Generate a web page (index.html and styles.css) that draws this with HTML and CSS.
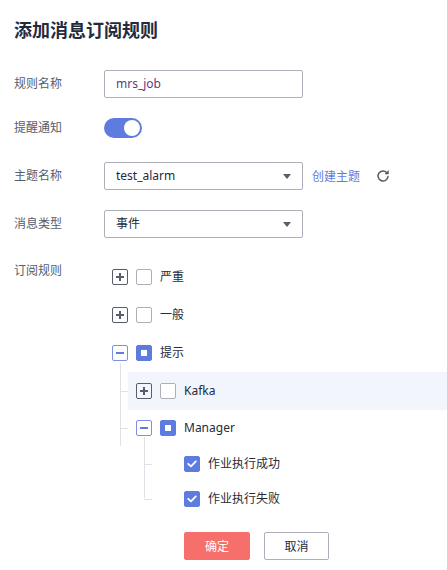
FILE: index.html
```html
<!DOCTYPE html>
<html lang="zh">
<head>
<meta charset="utf-8">
<title>添加消息订阅规则</title>
<link rel="stylesheet" href="styles.css">
</head>
<body>
<div class="page">
  <h1 class="title">添加消息订阅规则</h1>
  <div class="form">
    <div class="row r-name">
      <span class="lbl">规则名称</span>
      <div class="field input purple">mrs_job</div>
    </div>
    <div class="row r-toggle">
      <span class="lbl">提醒通知</span>
      <span class="switch"><span class="knob"></span></span>
    </div>
    <div class="row r-topic">
      <span class="lbl">主题名称</span>
      <div class="field select"><span>test_alarm</span><span class="caret"></span></div>
      <a class="link">创建主题</a>
      <svg class="refresh" width="14" height="14" viewBox="0 0 14 14" fill="none">
        <path d="M11.2 4.2 A5 5 0 1 0 12 7.6" stroke="#575d6c" stroke-width="1.5" stroke-linecap="round"/>
        <path d="M12.4 1.6 L12.4 5 L9 5 Z" fill="#575d6c" stroke="#575d6c" stroke-width="0.6" stroke-linejoin="round"/>
      </svg>
    </div>
    <div class="row r-type">
      <span class="lbl">消息类型</span>
      <div class="field select"><span>事件</span><span class="caret"></span></div>
    </div>
    <div class="row r-rules">
      <span class="lbl lbl-top">订阅规则</span>
      <div class="tree">
        <div class="node">
          <span class="tog plus"></span><span class="cb"></span><span class="txt">严重</span>
        </div>
        <div class="node">
          <span class="tog plus"></span><span class="cb"></span><span class="txt">一般</span>
        </div>
        <div class="node">
          <span class="tog minus"></span><span class="cb half"></span><span class="txt">提示</span>
        </div>
        <div class="children l1">
          <span class="vline vline-l1"></span>
          <div class="node conn active">
            <span class="tog plus"></span><span class="cb"></span><span class="txt">Kafka</span>
          </div>
          <div class="node conn mgr">
            <span class="tog minus"></span><span class="cb half"></span><span class="txt">Manager</span>
          </div>
          <div class="children l2">
            <span class="vline vline-l2"></span>
            <div class="node leaf conn">
              <span class="spacer"></span><span class="cb checked"><svg width="10" height="8" viewBox="0 0 10 8"><path d="M1.2 3.8 L4 6.4 L8.8 1.4" stroke="#fff" stroke-width="1.8" fill="none" stroke-linecap="round" stroke-linejoin="round"/></svg></span><span class="txt">作业执行成功</span>
            </div>
            <div class="node leaf conn">
              <span class="spacer"></span><span class="cb checked"><svg width="10" height="8" viewBox="0 0 10 8"><path d="M1.2 3.8 L4 6.4 L8.8 1.4" stroke="#fff" stroke-width="1.8" fill="none" stroke-linecap="round" stroke-linejoin="round"/></svg></span><span class="txt">作业执行失败</span>
            </div>
          </div>
        </div>
      </div>
    </div>
  </div>
  <div class="actions">
    <button class="btn primary">确定</button>
    <button class="btn">取消</button>
  </div>
</div>
</body>
</html>
```

FILE: styles.css
```css
* { box-sizing: border-box; }
html, body { margin: 0; padding: 0; background: #fff; }
body {
  font-family: "Noto Sans", "Noto Sans CJK SC", sans-serif;
  font-size: 12px;
  color: #252b3a;
}
.page { padding: 17px 0 0 14px; }
.title {
  margin: 0;
  font-size: 18px;
  line-height: 26px;
  font-weight: 700;
  color: #252b3a;
}
.form { margin-top: 27px; }
.row {
  display: flex;
  align-items: center;
  height: 28px;
}
.r-name { margin-bottom: 16px; }
.r-toggle { margin-bottom: 20px; }
.r-topic { margin-bottom: 20px; }
.r-type { margin-bottom: 20px; }
.r-rules { height: auto; align-items: flex-start; }
.lbl {
  width: 90px;
  flex: none;
  color: #575d6c;
  line-height: 18px;
}
.lbl-top { margin-top: 4px; }
.field {
  width: 199px;
  height: 28px;
  border: 1px solid #adb0b8;
  border-radius: 2px;
  padding: 0 11px;
  display: flex;
  align-items: center;
  line-height: 26px;
}
.purple { color: #5f3b87; }
.select { justify-content: space-between; }
.caret {
  width: 0; height: 0;
  border-left: 4px solid transparent;
  border-right: 4px solid transparent;
  border-top: 5px solid #575d6c;
  margin-right: 0px;
}
.switch {
  width: 38px;
  height: 20px;
  border-radius: 10px;
  background: #5e7ce0;
  display: flex;
  align-items: center;
  justify-content: flex-end;
  padding-right: 2px;
}
.knob {
  width: 16px; height: 16px;
  border-radius: 50%;
  background: #fff;
}
.link {
  margin-left: 9px;
  color: #5e7ce0;
  cursor: pointer;
}
.refresh { margin-left: 16px; }

.tree { flex: 1; }
.node {
  position: relative;
  display: flex;
  align-items: center;
  height: 38px;
  padding-left: 8px;
}
.node.mgr { height: 36px; }
.node.leaf { height: 35px; }
.node.active { background: #f2f5fc; }
.tog {
  width: 16px; height: 16px;
  border: 1px solid #575d6c;
  border-radius: 2px;
  position: relative;
  flex: none;
}
.tog::before {
  content: "";
  position: absolute;
  left: 3px; top: 6px;
  width: 8px; height: 2px;
  background: #575d6c;
}
.tog.plus::after {
  content: "";
  position: absolute;
  left: 6px; top: 3px;
  width: 2px; height: 8px;
  background: #575d6c;
}
.tog.minus { border-color: #7f8fe6; }
.tog.minus::before { background: #5e7ce0; }
.spacer { width: 16px; flex: none; }
.cb {
  width: 16px; height: 16px;
  border: 1px solid #adb0b8;
  border-radius: 2px;
  margin-left: 8px;
  flex: none;
  display: flex;
  align-items: center;
  justify-content: center;
  background: #fff;
}
.cb.half, .cb.checked {
  background: #5e7ce0;
  border-color: #5e7ce0;
}
.cb.half::before {
  content: "";
  width: 6px; height: 6px;
  background: #fff;
}
.txt { margin-left: 8px; line-height: 18px; }

.children {
  position: relative;
  margin-left: 24px;
}
.vline {
  position: absolute;
  left: -8px;
  width: 1px;
  background: #dfe1e6;
}
.vline-l1 { top: -9px; height: 83px; }
.vline-l2 { top: -9px; height: 61px; }
.conn::before {
  content: "";
  position: absolute;
  left: -8px;
  top: 50%;
  width: 8px;
  height: 1px;
  background: #dfe1e6;
}

.actions {
  margin: 16px 0 0 170px;
  display: flex;
  gap: 14px;
}
.btn {
  height: 28px;
  width: 65px;
  border: 1px solid #adb0b8;
  border-radius: 2px;
  background: #fff;
  color: #252b3a;
  font-family: inherit;
  font-size: 12px;
  padding: 0;
}
.btn.primary {
  width: 66px;
  background: #f66f6a;
  border-color: #f66f6a;
  color: #fff;
}
```
